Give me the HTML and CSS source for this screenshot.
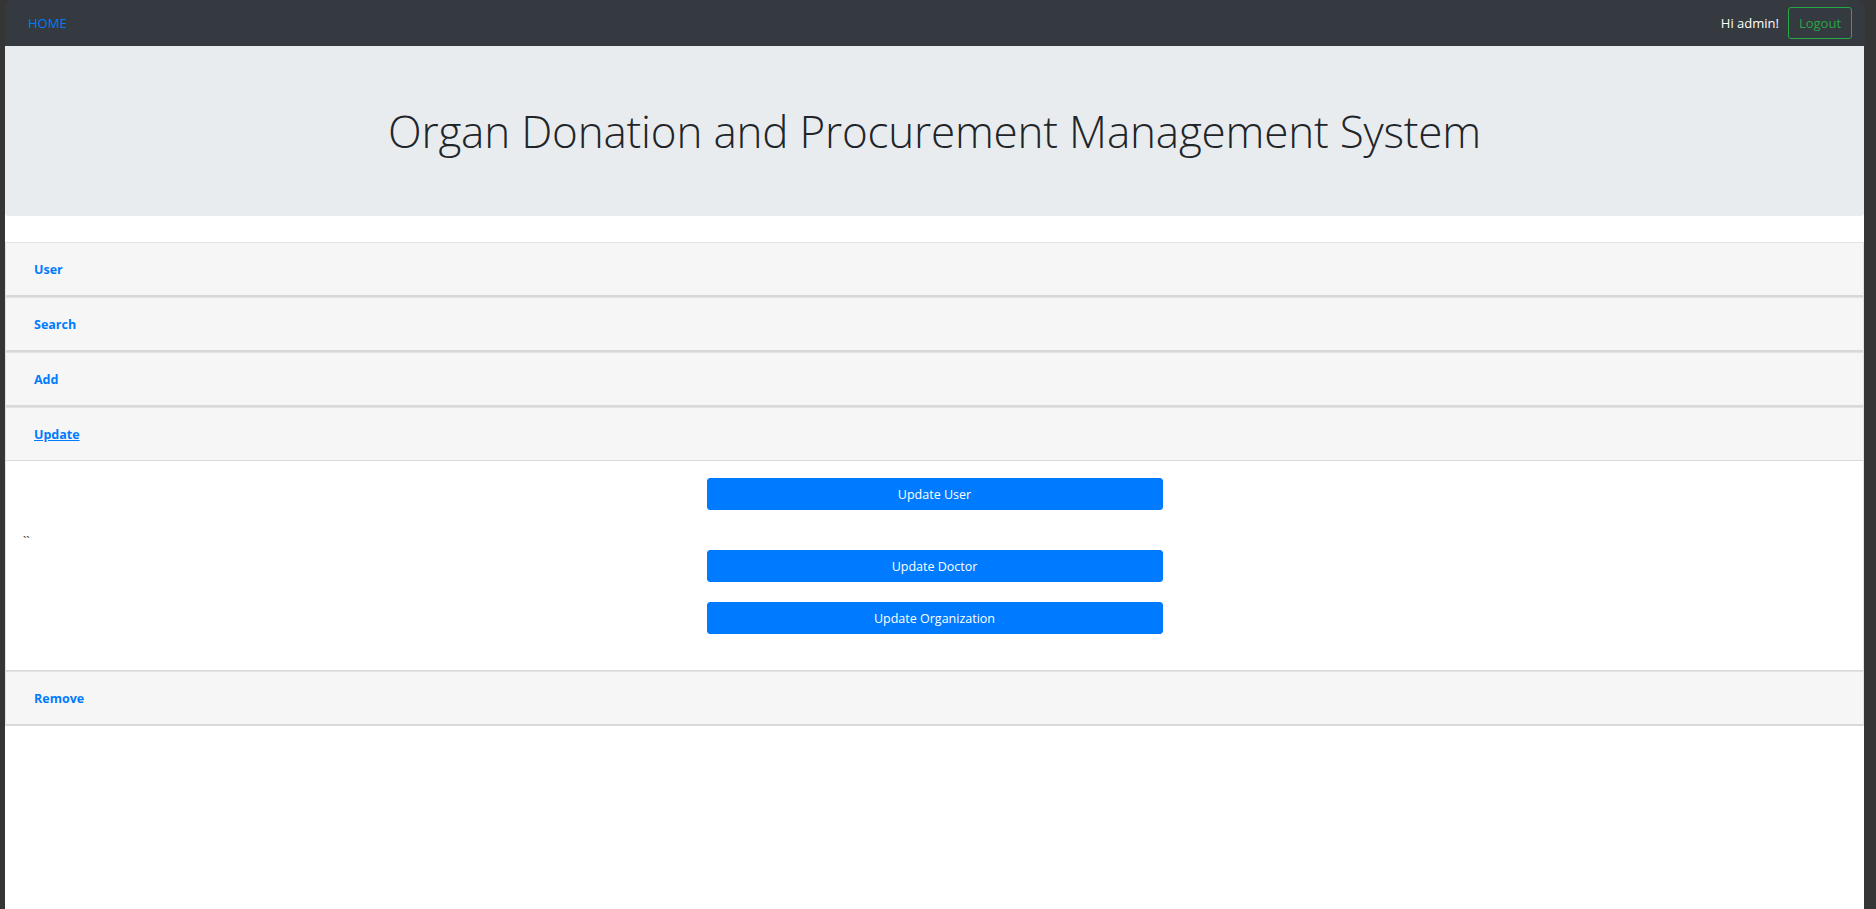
FILE: index.html
```html
<!DOCTYPE html>
<html lang="en">
<head>
<meta charset="utf-8">
<title>Organ Donation and Procurement Management System</title>
<link rel="stylesheet" href="styles.css">
</head>
<body>
<div class="frame">
  <nav class="navbar">
    <a class="nav-home" href="#">HOME</a>
    <div class="nav-right">
      <span class="greet">Hi admin!</span>
      <button class="btn-logout">Logout</button>
    </div>
  </nav>
  <main class="page">
    <header class="jumbotron">
      <h1 class="title">Organ Donation and Procurement Management System</h1>
    </header>
    <div class="accordion">
      <div class="card">
        <div class="card-header"><a class="card-link" href="#">User</a></div>
      </div>
      <div class="card">
        <div class="card-header"><a class="card-link" href="#">Search</a></div>
      </div>
      <div class="card">
        <div class="card-header"><a class="card-link" href="#">Add</a></div>
      </div>
      <div class="card">
        <div class="card-header"><a class="card-link active" href="#">Update</a></div>
        <div class="card-body">
          <button class="btn-primary">Update User</button>
          <div class="stray">``</div>
          <button class="btn-primary">Update Doctor</button>
          <button class="btn-primary gap">Update Organization</button>
        </div>
      </div>
      <div class="card">
        <div class="card-header"><a class="card-link" href="#">Remove</a></div>
      </div>
    </div>
  </main>
</div>
</body>
</html>
```
FILE: styles.css
```css
html, body {
  margin: 0;
  padding: 0;
  height: 100%;
}
body {
  background: #353535;
  font-family: "Open Sans", "Noto Sans", "Liberation Sans", sans-serif;
  color: #212529;
  overflow: hidden;
}
.frame {
  display: flex;
  flex-direction: column;
  height: 100%;
  padding: 0 11px 0 5px;
}
.navbar {
  height: 46px;
  flex: 0 0 46px;
  background: #343a40;
  border-radius: 8px 8px 0 0;
  display: flex;
  align-items: center;
  justify-content: space-between;
  padding: 0 13px 0 23px;
  box-sizing: border-box;
}
.nav-home {
  color: #007bff;
  text-decoration: none;
  font-size: 13px;
}
.nav-right {
  display: flex;
  align-items: center;
  gap: 9px;
}
.greet {
  color: #ffffff;
  font-size: 13px;
}
.btn-logout {
  width: 64px;
  height: 32px;
  background: transparent;
  border: 1px solid #28a745;
  border-radius: 3px;
  color: #28a745;
  font-family: inherit;
  font-size: 13px;
  padding: 0;
}
.page {
  flex: 1;
  background: #ffffff;
  margin-right: 1px;
}
.jumbotron {
  height: 170px;
  background: #e9ecef;
  display: flex;
  align-items: center;
  justify-content: center;
  margin-bottom: 26px;
  border-radius: 0 0 3px 3px;
}
.title {
  margin: 0;
  font-weight: 300;
  font-size: 44px;
  color: #212529;
  letter-spacing: -0.2px;
}
.card {
  border-top: 1px solid #e2e2e2;
  border-left: 1px solid #e2e2e2;
  border-right: 1px solid #e2e2e2;
  border-bottom: 1px solid #d8d8d8;
}
.card-header {
  height: 52px;
  background: #f6f6f6;
  border-bottom: 1px solid #d8d8d8;
  display: flex;
  align-items: center;
  padding-left: 28px;
}
.card-link {
  color: #007bff;
  font-weight: 700;
  font-size: 12.5px;
  text-decoration: none;
}
.card-link.active {
  text-decoration: underline;
}
.card-body {
  padding: 17px 17px 36px;
  display: flex;
  flex-direction: column;
  align-items: center;
}
.stray {
  align-self: flex-start;
  font-size: 12px;
  line-height: 17px;
  height: 17px;
  margin: 23px 0 0;
  color: #212529;
}
.btn-primary {
  width: 456px;
  height: 32px;
  background: #007bff;
  border: 1px solid #007bff;
  border-radius: 3px;
  color: #ffffff;
  font-family: inherit;
  font-size: 12.5px;
  padding: 0;
}
.btn-primary.gap {
  margin-top: 20px;
}
```
